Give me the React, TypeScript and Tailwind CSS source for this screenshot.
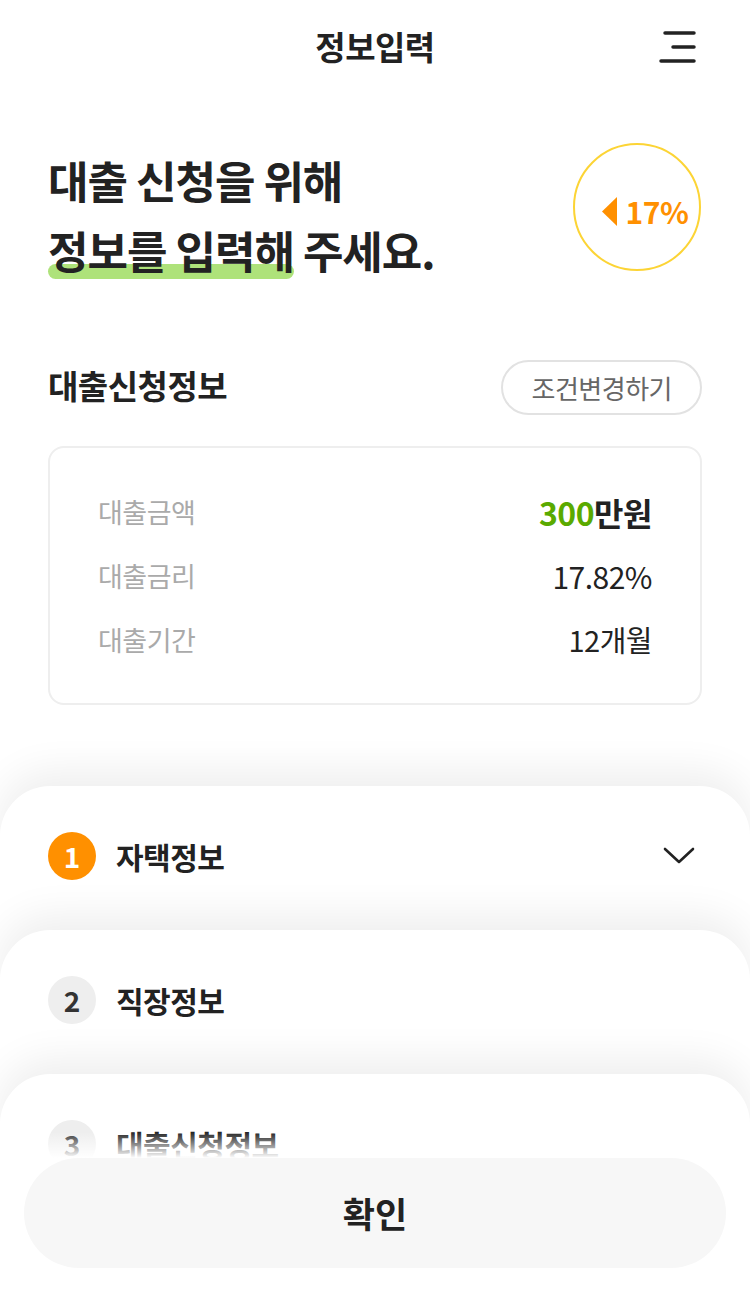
import React from "react";

const font = { fontFamily: '"Noto Sans CJK KR", "Noto Sans", sans-serif' };

function Hamburger() {
  return (
    <svg width="44" height="36" viewBox="0 0 44 36" fill="none">
      <line x1="8" y1="4" x2="37" y2="4" stroke="#222" strokeWidth="3.5" strokeLinecap="round" />
      <line x1="16" y1="18" x2="37" y2="18" stroke="#222" strokeWidth="3.5" strokeLinecap="round" />
      <line x1="4" y1="32" x2="37" y2="32" stroke="#222" strokeWidth="3.5" strokeLinecap="round" />
    </svg>
  );
}

function Chevron() {
  return (
    <svg width="34" height="20" viewBox="0 0 34 20" fill="none">
      <polyline points="3,3 17,16 31,3" stroke="#222" strokeWidth="2.6" strokeLinecap="round" strokeLinejoin="round" fill="none" />
    </svg>
  );
}

function StepCard({ n, title, active, chevron }: { n: number; title: string; active?: boolean; chevron?: boolean }) {
  return (
    <div className="relative h-[194px] -mt-[50px] first:mt-0 rounded-t-[50px] bg-white shadow-[0_-14px_40px_rgba(0,0,0,0.07)] px-[48px] pt-[46px]">
      <div className="flex items-center h-[48px]">
        <div
          className={
            active
              ? "w-[48px] h-[48px] rounded-full bg-[#ff9000] text-white flex items-center justify-center text-[28px] font-bold"
              : "w-[48px] h-[48px] rounded-full bg-[#eeeeee] text-[#333] flex items-center justify-center text-[28px] font-bold"
          }
        >
          {n}
        </div>
        <div className="ml-[20px] text-[30px] font-bold text-[#222] tracking-[-0.5px]">{title}</div>
        <div className="flex-1" />
        {chevron && (
          <div className="mr-[6px]">
            <Chevron />
          </div>
        )}
      </div>
    </div>
  );
}

export default function App() {
  return (
    <div className="relative w-full h-[1294px] overflow-hidden bg-white" style={font}>
      {/* header */}
      <div className="grid grid-cols-[1fr_auto_1fr] items-center h-[94px]">
        <div />
        <div className="text-[33px] font-bold text-[#222] tracking-[-0.5px]">정보입력</div>
        <div className="flex justify-end pr-[49px]">
          <Hamburger />
        </div>
      </div>

      {/* headline */}
      <div className="flex items-start justify-between px-[48px] mt-[51px]">
        <div className="text-[44px] font-bold text-[#222] leading-[70px] tracking-[-1px]">
          <div>대출 신청을 위해</div>
          <div>
            <span className="relative isolate inline-block">
              정보를 입력해
              <span className="absolute -z-10 left-0 right-0 bottom-[6px] h-[15px] rounded-full bg-[#aee27a]" />
            </span>{" "}
            주세요.
          </div>
        </div>
        <div className="mt-[-2px] mr-[1px] w-[128px] h-[128px] rounded-full border-[2px] border-[#fcd435] flex items-center justify-center">
          <div className="flex items-center gap-[9px] ml-[16px] mt-[8px]">
            <svg width="15" height="29" viewBox="0 0 15 29">
              <polygon points="15,0 15,29 0,14.5" fill="#ff9000" />
            </svg>
            <span className="text-[30px] font-bold text-[#ff9000] tracking-[-0.5px]">17%</span>
          </div>
        </div>
      </div>

      {/* section title */}
      <div className="flex items-center justify-between px-[48px] mt-[75px] h-[55px]">
        <div className="text-[33px] font-bold text-[#222] tracking-[-0.5px] -mt-[4px]">대출신청정보</div>
        <div className="h-[55px] px-[28px] rounded-full border-[2px] border-[#e2e2e2] flex items-center text-[26px] text-[#666] tracking-[-0.5px]">
          조건변경하기
        </div>
      </div>

      {/* info card */}
      <div className="mx-[48px] mt-[31px] rounded-[16px] border-[2px] border-[#eeeeee] px-[48px] pt-[32px] pb-[31px]">
        <div className="flex items-center justify-between h-[64px]">
          <span className="text-[27px] text-[#aaaaaa] tracking-[-0.5px]">대출금액</span>
          <span className="text-[32px] font-bold text-[#222] tracking-[-0.5px]">
            <span className="text-[#5aaa00]">300</span>만원
          </span>
        </div>
        <div className="flex items-center justify-between h-[64px]">
          <span className="text-[27px] text-[#aaaaaa] tracking-[-0.5px]">대출금리</span>
          <span className="text-[30px] text-[#222] tracking-[-0.5px]">17.82%</span>
        </div>
        <div className="flex items-center justify-between h-[64px]">
          <span className="text-[27px] text-[#aaaaaa] tracking-[-0.5px]">대출기간</span>
          <span className="text-[29px] text-[#222] tracking-[-0.5px]">12개월</span>
        </div>
      </div>

      {/* steps */}
      <div className="mt-[81px] flex flex-col">
        <StepCard n={1} title="자택정보" active chevron />
        <StepCard n={2} title="직장정보" />
        <StepCard n={3} title="대출신청정보" />
      </div>

      {/* bottom bar */}
      <div className="absolute left-0 right-0 bottom-0">
        <div className="h-[26px] bg-gradient-to-b from-white/0 to-white" />
        <div className="bg-white px-[24px] pb-[26px]">
          <div className="h-[110px] rounded-full bg-[#f7f7f7] flex items-center justify-center text-[35px] font-bold text-[#222]">
            확인
          </div>
        </div>
      </div>
    </div>
  );
}
